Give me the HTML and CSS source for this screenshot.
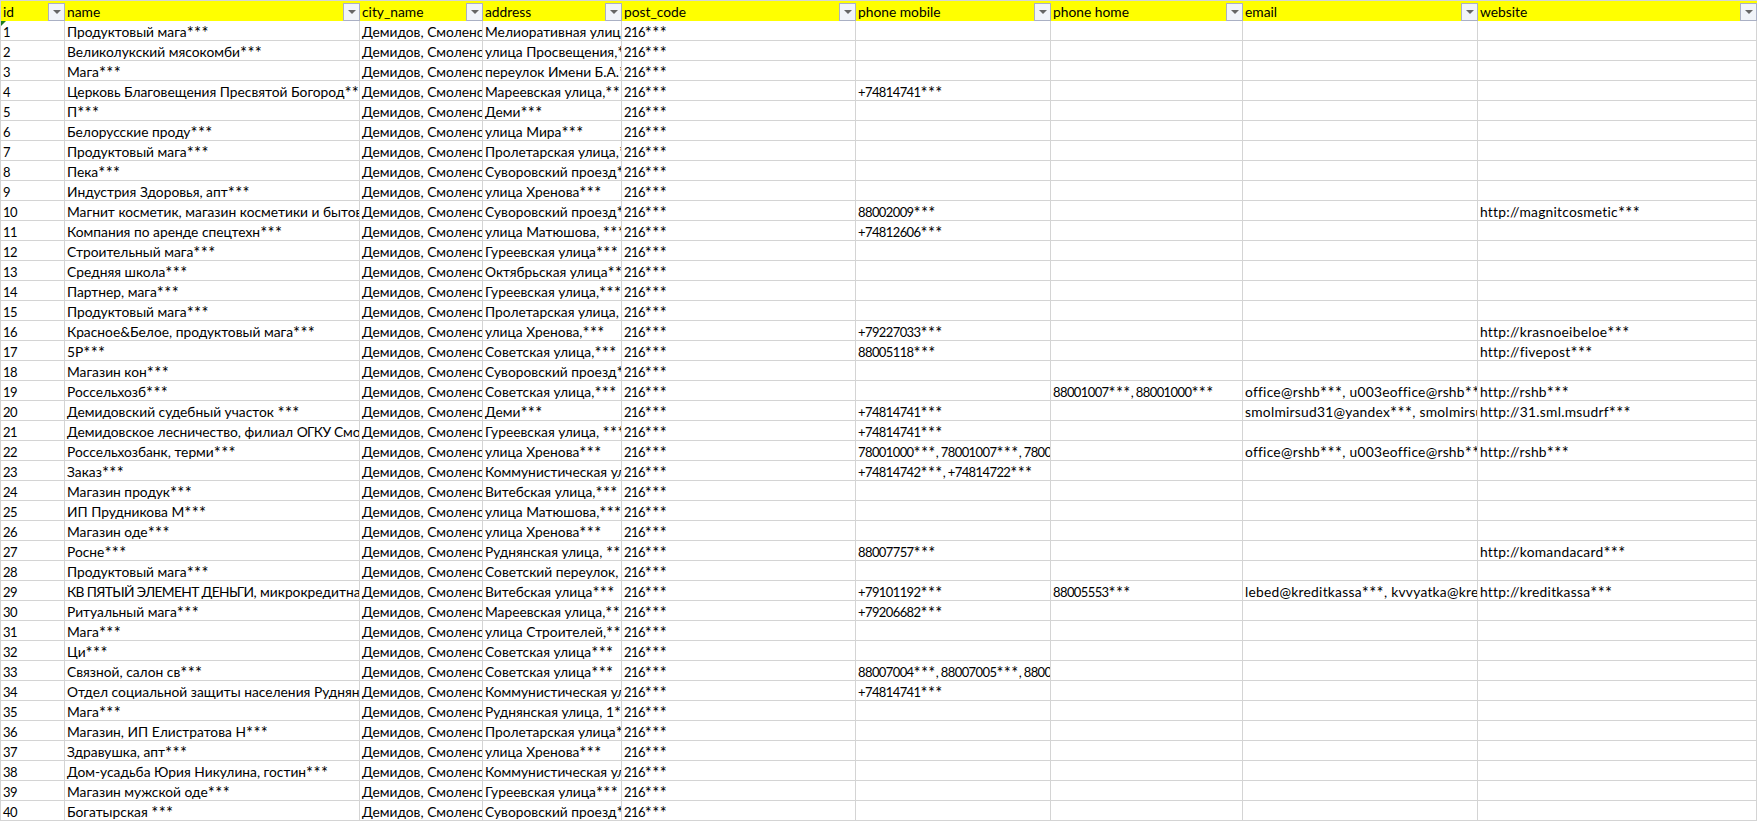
FILE: index.html
```html
<!DOCTYPE html>
<html lang="ru">
<head>
<meta charset="utf-8">
<title>Демидов</title>
<link rel="stylesheet" href="styles.css">
</head>
<body>
<table class="sheet">
<colgroup><col class="c-id"><col class="c-name"><col class="c-city"><col class="c-addr"><col class="c-post"><col class="c-mob"><col class="c-home"><col class="c-mail"><col class="c-web"></colgroup>
<thead><tr>
<th><div class="head"><span class="label">id</span><span class="filter"></span></div></th>
<th><div class="head"><span class="label">name</span><span class="filter"></span></div></th>
<th><div class="head"><span class="label">city_name</span><span class="filter"></span></div></th>
<th><div class="head"><span class="label">address</span><span class="filter"></span></div></th>
<th><div class="head"><span class="label">post_code</span><span class="filter"></span></div></th>
<th><div class="head"><span class="label">phone mobile</span><span class="filter"></span></div></th>
<th><div class="head"><span class="label">phone home</span><span class="filter"></span></div></th>
<th><div class="head"><span class="label">email</span><span class="filter"></span></div></th>
<th><div class="head"><span class="label">website</span><span class="filter"></span></div></th>
</tr></thead>
<tbody>
<tr><td class="flagged">1</td><td>Продуктовый мага<i>***</i></td><td>Демидов, Смоленская</td><td>Мелиоративная улица<i>***</i></td><td>216<i>***</i></td><td></td><td></td><td></td><td></td></tr>
<tr><td>2</td><td>Великолукский мясокомби<i>***</i></td><td>Демидов, Смоленская</td><td>улица Просвещения,<i>***</i></td><td>216<i>***</i></td><td></td><td></td><td></td><td></td></tr>
<tr><td>3</td><td>Мага<i>***</i></td><td>Демидов, Смоленская</td><td>переулок Имени Б.А.<i>***</i></td><td>216<i>***</i></td><td></td><td></td><td></td><td></td></tr>
<tr><td>4</td><td>Церковь Благовещения Пресвятой Богород<i>***</i></td><td>Демидов, Смоленская</td><td>Мареевская улица,<i>***</i></td><td>216<i>***</i></td><td>+74814741<i>***</i></td><td></td><td></td><td></td></tr>
<tr><td>5</td><td>П<i>***</i></td><td>Демидов, Смоленская</td><td>Деми<i>***</i></td><td>216<i>***</i></td><td></td><td></td><td></td><td></td></tr>
<tr><td>6</td><td>Белорусские проду<i>***</i></td><td>Демидов, Смоленская</td><td>улица Мира<i>***</i></td><td>216<i>***</i></td><td></td><td></td><td></td><td></td></tr>
<tr><td>7</td><td>Продуктовый мага<i>***</i></td><td>Демидов, Смоленская</td><td>Пролетарская улица,<i>***</i></td><td>216<i>***</i></td><td></td><td></td><td></td><td></td></tr>
<tr><td>8</td><td>Пека<i>***</i></td><td>Демидов, Смоленская</td><td>Суворовский проезд<i>***</i></td><td>216<i>***</i></td><td></td><td></td><td></td><td></td></tr>
<tr><td>9</td><td>Индустрия Здоровья, апт<i>***</i></td><td>Демидов, Смоленская</td><td>улица Хренова<i>***</i></td><td>216<i>***</i></td><td></td><td></td><td></td><td></td></tr>
<tr><td>10</td><td>Магнит косметик, магазин косметики и бытовой химии<i>***</i></td><td>Демидов, Смоленская</td><td>Суворовский проезд<i>***</i></td><td>216<i>***</i></td><td>88002009<i>***</i></td><td></td><td></td><td>http://magnitcosmetic<i>***</i></td></tr>
<tr><td>11</td><td>Компания по аренде спецтехн<i>***</i></td><td>Демидов, Смоленская</td><td>улица Матюшова, <i>***</i></td><td>216<i>***</i></td><td>+74812606<i>***</i></td><td></td><td></td><td></td></tr>
<tr><td>12</td><td>Строительный мага<i>***</i></td><td>Демидов, Смоленская</td><td>Гуреевская улица<i>***</i></td><td>216<i>***</i></td><td></td><td></td><td></td><td></td></tr>
<tr><td>13</td><td>Средняя школа<i>***</i></td><td>Демидов, Смоленская</td><td>Октябрьская улица<i>***</i></td><td>216<i>***</i></td><td></td><td></td><td></td><td></td></tr>
<tr><td>14</td><td>Партнер, мага<i>***</i></td><td>Демидов, Смоленская</td><td>Гуреевская улица,<i>***</i></td><td>216<i>***</i></td><td></td><td></td><td></td><td></td></tr>
<tr><td>15</td><td>Продуктовый мага<i>***</i></td><td>Демидов, Смоленская</td><td>Пролетарская улица, <i>***</i></td><td>216<i>***</i></td><td></td><td></td><td></td><td></td></tr>
<tr><td>16</td><td>Красное&amp;Белое, продуктовый мага<i>***</i></td><td>Демидов, Смоленская</td><td>улица Хренова,<i>***</i></td><td>216<i>***</i></td><td>+79227033<i>***</i></td><td></td><td></td><td>http://krasnoeibeloe<i>***</i></td></tr>
<tr><td>17</td><td>5Р<i>***</i></td><td>Демидов, Смоленская</td><td>Советская улица,<i>***</i></td><td>216<i>***</i></td><td>88005118<i>***</i></td><td></td><td></td><td>http://fivepost<i>***</i></td></tr>
<tr><td>18</td><td>Магазин кон<i>***</i></td><td>Демидов, Смоленская</td><td>Суворовский проезд<i>***</i></td><td>216<i>***</i></td><td></td><td></td><td></td><td></td></tr>
<tr><td>19</td><td>Россельхозб<i>***</i></td><td>Демидов, Смоленская</td><td>Советская улица,<i>***</i></td><td>216<i>***</i></td><td></td><td>88001007<i>***</i>, 88001000<i>***</i></td><td>office@rshb<i>***</i>, u003eoffice@rshb<i>***</i></td><td>http://rshb<i>***</i></td></tr>
<tr><td>20</td><td>Демидовский судебный участок <i>***</i></td><td>Демидов, Смоленская</td><td>Деми<i>***</i></td><td>216<i>***</i></td><td>+74814741<i>***</i></td><td></td><td>smolmirsud31@yandex<i>***</i>, smolmirsud31<i>***</i></td><td>http://31.sml.msudrf<i>***</i></td></tr>
<tr><td>21</td><td>Демидовское лесничество, филиал <span class="caps">ОГКУ</span> Смо.<i>***</i></td><td>Демидов, Смоленская</td><td>Гуреевская улица, <i>***</i></td><td>216<i>***</i></td><td>+74814741<i>***</i></td><td></td><td></td><td></td></tr>
<tr><td>22</td><td>Россельхозбанк, терми<i>***</i></td><td>Демидов, Смоленская</td><td>улица Хренова<i>***</i></td><td>216<i>***</i></td><td>78001000<i>***</i>, 78001007<i>***</i>, 78001000<i>***</i></td><td></td><td>office@rshb<i>***</i>, u003eoffice@rshb<i>***</i></td><td>http://rshb<i>***</i></td></tr>
<tr><td>23</td><td>Заказ<i>***</i></td><td>Демидов, Смоленская</td><td>Коммунистическая улица<i>***</i></td><td>216<i>***</i></td><td>+74814742<i>***</i>, +74814722<i>***</i></td><td></td><td></td><td></td></tr>
<tr><td>24</td><td>Магазин продук<i>***</i></td><td>Демидов, Смоленская</td><td>Витебская улица,<i>***</i></td><td>216<i>***</i></td><td></td><td></td><td></td><td></td></tr>
<tr><td>25</td><td>ИП Прудникова М<i>***</i></td><td>Демидов, Смоленская</td><td>улица Матюшова,<i>***</i></td><td>216<i>***</i></td><td></td><td></td><td></td><td></td></tr>
<tr><td>26</td><td>Магазин оде<i>***</i></td><td>Демидов, Смоленская</td><td>улица Хренова<i>***</i></td><td>216<i>***</i></td><td></td><td></td><td></td><td></td></tr>
<tr><td>27</td><td>Росне<i>***</i></td><td>Демидов, Смоленская</td><td>Руднянская улица, <i>***</i></td><td>216<i>***</i></td><td>88007757<i>***</i></td><td></td><td></td><td>http://komandacard<i>***</i></td></tr>
<tr><td>28</td><td>Продуктовый мага<i>***</i></td><td>Демидов, Смоленская</td><td>Советский переулок, <i>***</i></td><td>216<i>***</i></td><td></td><td></td><td></td><td></td></tr>
<tr><td>29</td><td><span class="caps">КВ ПЯТЫЙ ЭЛЕМЕНТ ДЕНЬГИ</span>, микрокредитная компания<i>***</i></td><td>Демидов, Смоленская</td><td>Витебская улица<i>***</i></td><td>216<i>***</i></td><td>+79101192<i>***</i></td><td>88005553<i>***</i></td><td>lebed@kreditkassa<i>***</i>, kvvyatka@kreditkassa<i>***</i></td><td>http://kreditkassa<i>***</i></td></tr>
<tr><td>30</td><td>Ритуальный мага<i>***</i></td><td>Демидов, Смоленская</td><td>Мареевская улица,<i>***</i></td><td>216<i>***</i></td><td>+79206682<i>***</i></td><td></td><td></td><td></td></tr>
<tr><td>31</td><td>Мага<i>***</i></td><td>Демидов, Смоленская</td><td>улица Строителей,<i>***</i></td><td>216<i>***</i></td><td></td><td></td><td></td><td></td></tr>
<tr><td>32</td><td>Ци<i>***</i></td><td>Демидов, Смоленская</td><td>Советская улица<i>***</i></td><td>216<i>***</i></td><td></td><td></td><td></td><td></td></tr>
<tr><td>33</td><td>Связной, салон св<i>***</i></td><td>Демидов, Смоленская</td><td>Советская улица<i>***</i></td><td>216<i>***</i></td><td>88007004<i>***</i>, 88007005<i>***</i>, 88007006<i>***</i></td><td></td><td></td><td></td></tr>
<tr><td>34</td><td>Отдел социальной защиты населения Руднянского<i>***</i></td><td>Демидов, Смоленская</td><td>Коммунистическая улица<i>***</i></td><td>216<i>***</i></td><td>+74814741<i>***</i></td><td></td><td></td><td></td></tr>
<tr><td>35</td><td>Мага<i>***</i></td><td>Демидов, Смоленская</td><td>Руднянская улица, 1<i>***</i></td><td>216<i>***</i></td><td></td><td></td><td></td><td></td></tr>
<tr><td>36</td><td>Магазин, ИП Елистратова Н<i>***</i></td><td>Демидов, Смоленская</td><td>Пролетарская улица<i>***</i></td><td>216<i>***</i></td><td></td><td></td><td></td><td></td></tr>
<tr><td>37</td><td>Здравушка, апт<i>***</i></td><td>Демидов, Смоленская</td><td>улица Хренова<i>***</i></td><td>216<i>***</i></td><td></td><td></td><td></td><td></td></tr>
<tr><td>38</td><td>Дом-усадьба Юрия Никулина, гостин<i>***</i></td><td>Демидов, Смоленская</td><td>Коммунистическая улица<i>***</i></td><td>216<i>***</i></td><td></td><td></td><td></td><td></td></tr>
<tr><td>39</td><td>Магазин мужской оде<i>***</i></td><td>Демидов, Смоленская</td><td>Гуреевская улица<i>***</i></td><td>216<i>***</i></td><td></td><td></td><td></td><td></td></tr>
<tr><td>40</td><td>Богатырская <i>***</i></td><td>Демидов, Смоленская</td><td>Суворовский проезд<i>***</i></td><td>216<i>***</i></td><td></td><td></td><td></td><td></td></tr>
</tbody>
</table>
</body>
</html>
```
FILE: styles.css
```css
html, body {
  margin: 0;
  padding: 0;
  background: #fff;
}

.sheet {
  border-collapse: separate;
  border-spacing: 0;
  table-layout: fixed;
  width: 1757px;
  border-left: 1px solid #d4d4d4;
  border-top: 1px solid #d4d4d4;
  font-family: "Lato", "Open Sans", sans-serif;
  font-size: 13.8px;
  color: #000;
}

.c-id { width: 64px; }
.c-name { width: 295px; }
.c-city { width: 123px; }
.c-addr { width: 139px; }
.c-post { width: 234px; }
.c-mob { width: 195px; }
.c-home { width: 192px; }
.c-mail { width: 235px; }
.c-web { width: 279px; }

th {
  height: 20px;
  padding: 0;
  background: #ffff00;
  font-weight: 400;
  text-align: left;
}

.head {
  display: flex;
  align-items: center;
  justify-content: space-between;
  box-sizing: border-box;
  height: 20px;
  padding: 0 0 0 2px;
}

.label {
  white-space: nowrap;
  padding-top: 1px;
}

.filter {
  display: flex;
  align-items: center;
  justify-content: center;
  box-sizing: border-box;
  width: 17px;
  height: 18px;
  margin-top: 1px;
  border: 1px solid #aab0c4;
  background: #f1f4f9;
}

.filter::before {
  content: "";
  border-top: 4px solid #666;
  border-left: 4px solid transparent;
  border-right: 4px solid transparent;
}

td {
  box-sizing: border-box;
  height: 20px;
  padding: 2px 2px 0;
  border-right: 1px solid #d4d4d4;
  border-bottom: 1px solid #d4d4d4;
  overflow: hidden;
  white-space: nowrap;
  line-height: 17px;
  vertical-align: bottom;
}

/* digit columns: narrow figures sharing the row's baseline */
td:nth-child(1),
td:nth-child(5),
td:nth-child(6),
td:nth-child(7) {
  padding-top: 3px;
  font-size: 13px;
  letter-spacing: -0.6px;
  line-height: 16px;
}

/* latin columns run a little wider */
td:nth-child(8),
td:nth-child(9) {
  letter-spacing: 0.25px;
}

/* mask asterisks */
td i {
  font-style: normal;
  font-size: 16.5px;
  letter-spacing: 0.4px;
  line-height: 0;
  vertical-align: -2px;
}

.caps {
  letter-spacing: -0.65px;
}

.flagged {
  position: relative;
}

.flagged::before {
  content: "";
  position: absolute;
  top: 0;
  left: 0;
  border-top: 5px solid #1e7b1e;
  border-right: 5px solid transparent;
}
```
